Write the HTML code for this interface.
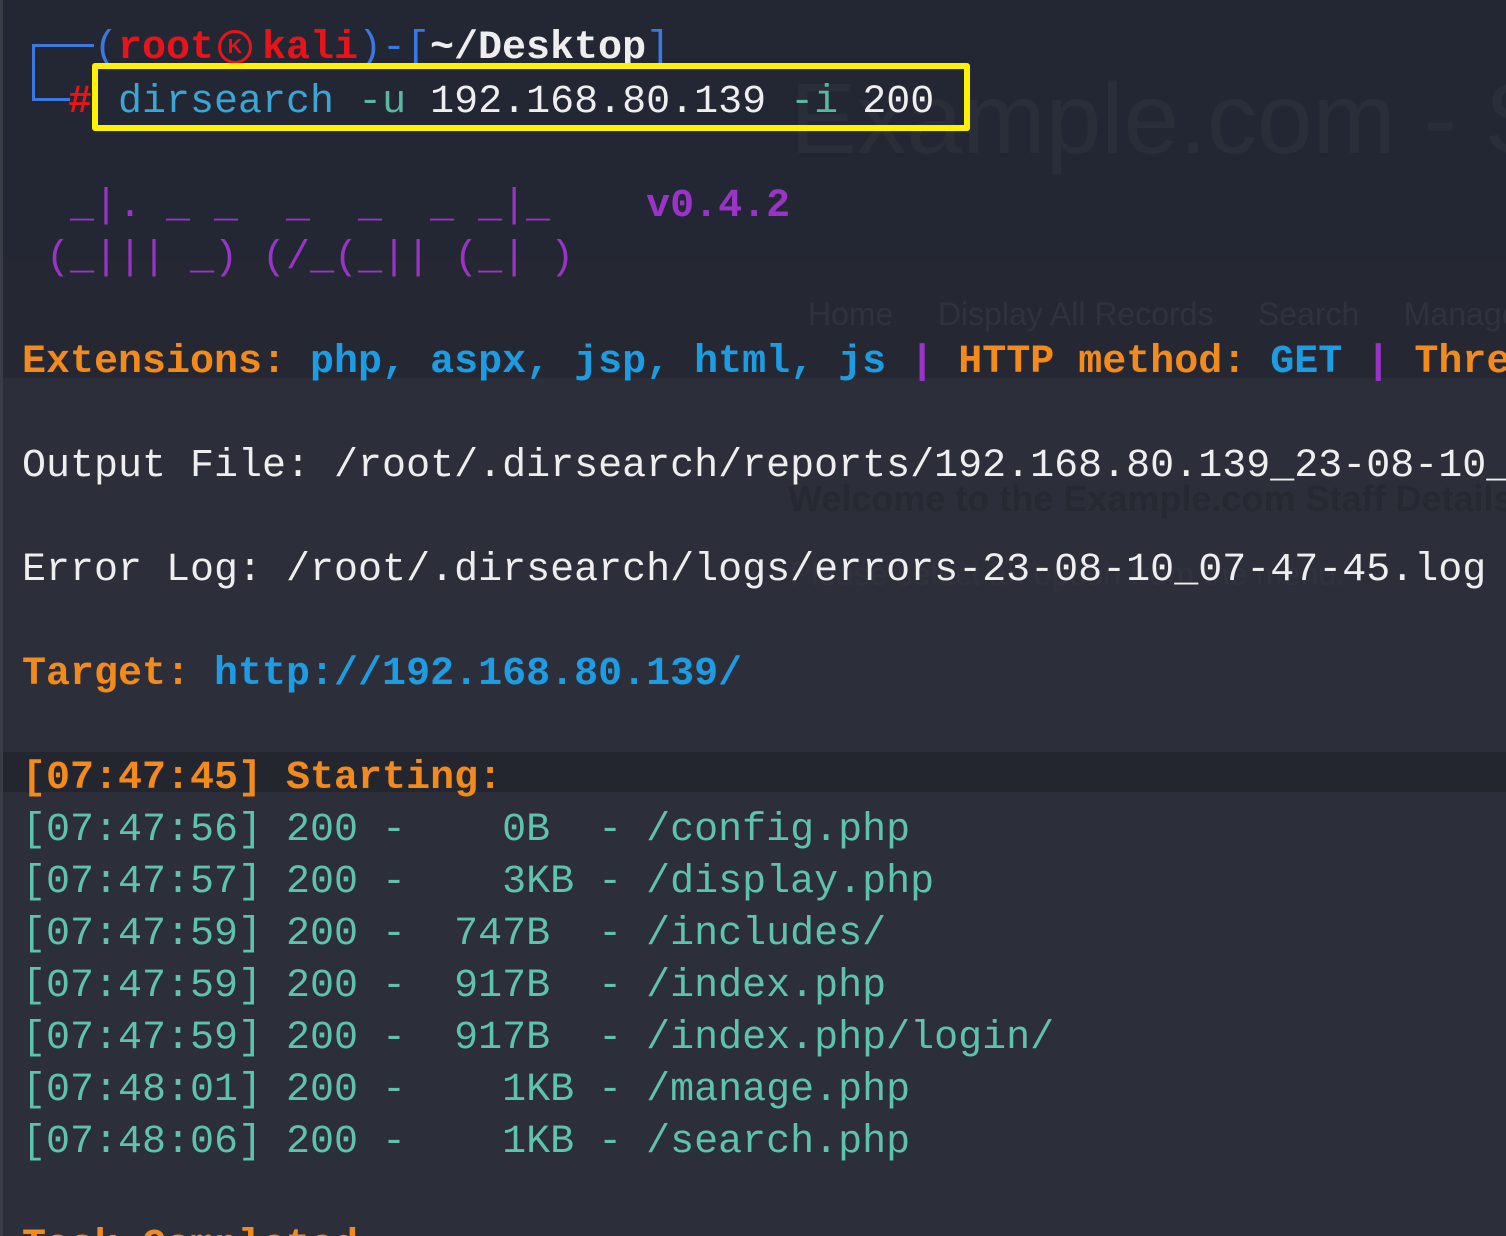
<!DOCTYPE html>
<html><head><meta charset="utf-8"><style>
html,body{margin:0;padding:0;overflow:hidden;width:1506px;height:1236px}
body{background:#232733;position:relative;font-family:"Liberation Mono","DejaVu Sans Mono",monospace;font-size:40px}
.bg{position:absolute;left:0;width:1506px}
.l{position:absolute;left:22px;white-space:pre;line-height:52px;height:52px;overflow:hidden;max-width:1484px;margin-top:3px}
.b{font-weight:bold}
.o{color:#f28a1c}.bl{color:#1e9ce2}.p{color:#9a34c6}.w{color:#eeeeee}.t{color:#5ec2ad}
.wm{position:absolute;font-family:"Liberation Sans",sans-serif;color:#2a2e39;white-space:pre;overflow:hidden}
</style></head><body>
<div class="bg" style="top:258px;height:120px;background:#252832"></div>
<div class="bg" style="top:378px;height:858px;background:#2c2f39"></div>
<div class="bg" style="top:752px;height:40px;background:#23262f"></div>
<div style="position:absolute;left:0;top:0;width:3px;height:1236px;background:#3a3d46"></div>

<div class="wm" style="left:790px;top:62px;width:716px;font-size:100px">Example.com - S</div>
<div class="wm" style="left:808px;top:296px;width:698px;font-size:32px;color:#30333d">Home     Display All Records     Search     Manage</div>
<div class="wm" style="left:788px;top:478px;width:718px;font-size:36px;font-weight:bold;color:#262932">Welcome to the Example.com Staff Details</div>
<div class="wm" style="left:790px;top:556px;width:716px;font-size:32px;color:#30333d">Please select an option from the menu.</div>

<!-- prompt -->
<div style="position:absolute;left:32px;top:45px;width:3px;height:56px;background:#3b78e0"></div>
<div style="position:absolute;left:32px;top:44px;width:62px;height:3px;background:#3b78e0"></div>
<div style="position:absolute;left:32px;top:98px;width:38px;height:3px;background:#3b78e0"></div>
<div class="l b" style="left:94px;top:20px"><span style="color:#3b78e0;font-weight:normal">(</span><span style="color:#e8141a">root</span></div>
<div style="position:absolute;left:218px;top:30px;width:28px;height:28px;border:3px solid #e8141a;border-radius:50%;color:#e8141a;font:bold 20px 'Liberation Sans',sans-serif;text-align:center;line-height:28px">K</div>
<div class="l b" style="left:262px;top:20px"><span style="color:#e8141a">kali</span><span style="color:#3b78e0;font-weight:normal">)-[</span><span class="w">~/Desktop</span><span style="color:#3b78e0;font-weight:normal">]</span></div>
<div class="l b" style="left:68px;top:74px;color:#e8141a">#</div>
<div style="position:absolute;left:92px;top:63px;width:866px;height:56px;border:6px solid #fff200;border-radius:3px"></div>
<div class="l" style="left:118px;top:74px"><span style="color:#3aa6d6">dirsearch</span> <span style="color:#5ab8a0">-u</span> <span class="w">192.168.80.139</span> <span style="color:#5ab8a0">-i</span> <span class="w">200</span></div>

<div class="l p" style="top:178px">  _|. _ _  _  _  _ _|_    <b>v0.4.2</b></div>
<div class="l p" style="top:230px"> (_||| _) (/_(_|| (_| )</div>

<div class="l b" style="top:334px"><span class="o">Extensions: </span><span class="bl">php, aspx, jsp, html, js</span> <span class="p">|</span> <span class="o">HTTP method: </span><span class="bl">GET</span> <span class="p">|</span> <span class="o">Threads: </span></div>
<div class="l w" style="top:438px">Output File: /root/.dirsearch/reports/192.168.80.139_23-08-10_07-47-45.txt</div>
<div class="l w" style="top:542px">Error Log: /root/.dirsearch/logs/errors-23-08-10_07-47-45.log</div>
<div class="l b" style="top:646px"><span class="o">Target: </span><span class="bl">http://192.168.80.139/</span></div>
<div class="l b o" style="top:750px">[07:47:45] Starting:</div>
<div class="l t" style="top:802px">[07:47:56] 200 -    0B  - /config.php</div>
<div class="l t" style="top:854px">[07:47:57] 200 -    3KB - /display.php</div>
<div class="l t" style="top:906px">[07:47:59] 200 -  747B  - /includes/</div>
<div class="l t" style="top:958px">[07:47:59] 200 -  917B  - /index.php</div>
<div class="l t" style="top:1010px">[07:47:59] 200 -  917B  - /index.php/login/</div>
<div class="l t" style="top:1062px">[07:48:01] 200 -    1KB - /manage.php</div>
<div class="l t" style="top:1114px">[07:48:06] 200 -    1KB - /search.php</div>
<div class="l b o" style="top:1218px;height:18px">Task Completed</div>
</body></html>
